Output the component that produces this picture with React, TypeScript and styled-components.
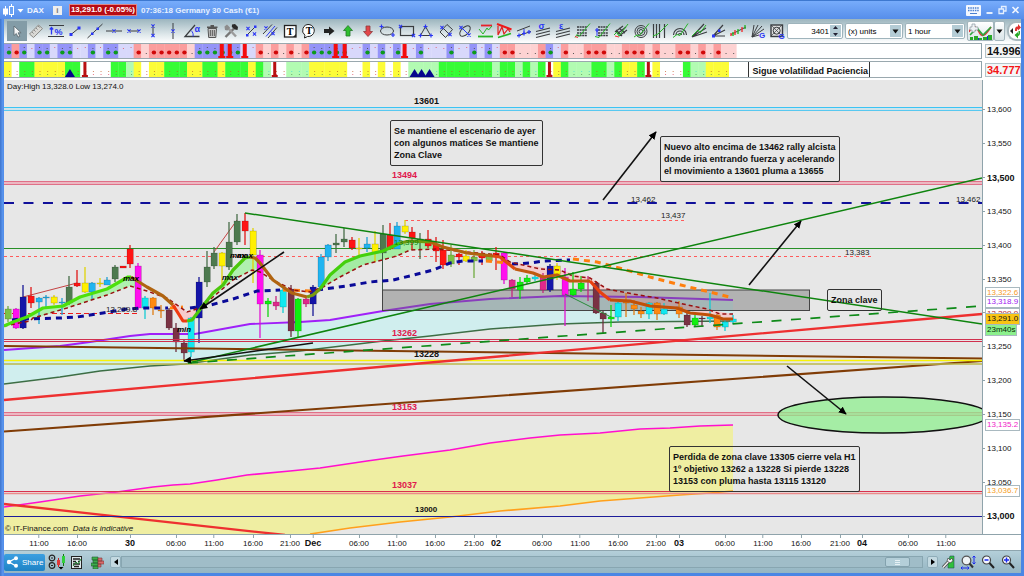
import React from "react";
import styled, { createGlobalStyle, css } from "styled-components";

const GlobalStyle = createGlobalStyle`
  * { box-sizing: border-box; }
  body { margin: 0; background: #4a86e4; font-family: "Liberation Sans", Arial, sans-serif; color: #111; }
  button, input, select { font-family: inherit; }
`;

/* ---------- shell ---------- */

const Shell = styled.div`
  display: flex;
  flex-direction: column;
  min-height: 100vh;
  padding: 0 3px 3px 4px;
  background: linear-gradient(90deg, #3f74cc 0, #5b98f2 3px, #4a86e4 4px);
`;

const TitleBar = styled.header`
  display: flex;
  align-items: center;
  height: 19px;
  margin: 0 -3px 0 -4px;
  padding: 0 4px 0 3px;
  border-top: 1px solid #3d78d0;
  background: linear-gradient(#77acfb, #568eea);
  color: #fff;
  font-size: 8px;
  font-weight: bold;
`;

const Instrument = styled.button`
  display: flex;
  align-items: center;
  gap: 3px;
  padding: 0;
  border: 0;
  background: none;
  color: #f0f6ff;
  font-size: 8px;
  font-weight: bold;
`;

const InfoButton = styled.button`
  width: 9px;
  height: 9px;
  margin: 0 7px 0 9px;
  padding: 0;
  border: 0;
  background: #eee;
  color: #777;
  font-size: 8px;
  line-height: 9px;
  font-weight: bold;
`;

const Quote = styled.span`
  padding: 0 1px;
  border: 1px solid #d88;
  background: #b80c14;
  line-height: 10px;
  white-space: nowrap;
`;

const Clock = styled.span`
  margin-left: 4px;
  color: #e6f0ff;
  white-space: nowrap;
`;

const WindowButtons = styled.div`
  display: flex;
  align-items: center;
  gap: 4px;
  margin-left: auto;
`;

const PlainButton = styled.button`
  display: flex;
  padding: 0;
  border: 0;
  background: none;
`;

/* ---------- toolbar ---------- */

const Toolbar = styled.div`
  display: flex;
  align-items: center;
  height: 24px;
  background: linear-gradient(#9cb5be, #dfe8eb 65%, #fff);
`;

const ToolGroup = styled.div`
  display: grid;
  grid-auto-flow: column;
  grid-auto-columns: 1fr;
  flex: 1;
  max-width: 780px;
  margin-left: 3px;
`;

const Tool = styled.button<{ $active?: boolean }>`
  display: flex;
  align-items: center;
  justify-content: center;
  height: 20px;
  padding: 0;
  border: 0;
  background: ${(p) => (p.$active ? "#839ca7" : "none")};
`;

const field = css`
  height: 16px;
  border: 1px solid #9fb4bc;
  border-radius: 2px;
  background: #fff;
  color: #222;
  font-size: 8px;
`;

const NumberBox = styled.label`
  ${field}
  display: flex;
  width: 56px;
  margin-right: 2px;
  padding: 1px;
`;

const NumberInput = styled.input`
  flex: 1;
  min-width: 0;
  padding: 0 1px;
  border: 0;
  outline: 0;
  background: none;
  font-size: 8px;
  text-align: right;
`;

const Spinner = styled.span`
  display: flex;
  width: 11px;
  align-items: center;
  justify-content: center;
  background: #b4ccd5;
`;

const SelectWrap = styled.span<{ $w: number }>`
  ${field}
  display: flex;
  width: ${(p) => p.$w}px;
  margin-right: 2px;
  padding: 1px;
`;

const Select = styled.select`
  appearance: none;
  flex: 1;
  min-width: 0;
  padding: 0 0 0 1px;
  border: 0;
  background: none;
  font-size: 8px;
`;

const IndicatorButton = styled.button<{ $w: number }>`
  display: flex;
  align-items: center;
  justify-content: center;
  width: ${(p) => p.$w}px;
  height: 20px;
  padding: 0;
  border: 1px solid #a4b6bd;
  border-radius: 2px;
  background: linear-gradient(#fff, #d9e4e8);
`;

const FlipButton = styled.button`
  display: flex;
  align-items: center;
  flex: none;
  width: 14px;
  height: 20px;
  margin-left: auto;
  padding: 0 0 0 1px;
  border: 2px solid #a9b9bf;
  border-right: 0;
  border-radius: 9px 0 0 9px;
  background: #fff;
`;

/* ---------- panels ---------- */

const Panels = styled.main`
  display: grid;
  grid-template-columns: 1fr 39px;
  background: #fff;
`;

const StripPlot = styled.div<{ $h: number }>`
  position: relative;
  height: ${(p) => p.$h}px;
  border-top: 1px solid #9aa8ae;
  border-right: 1px solid #8fa3ab;
  border-bottom: 1px solid #9aa8ae;
  margin-bottom: 2px;
  overflow: hidden;
`;

const StripSvg = styled.svg`
  display: block;
  width: 100%;
  height: 100%;
`;

const StripValue = styled.div<{ $color: string }>`
  align-self: center;
  margin: 0 0 2px 3px;
  padding-left: 1px;
  border: 1px solid #b4c3c9;
  background: #f4f6f7;
  color: ${(p) => p.$color};
  font-size: 11px;
  line-height: 12px;
  font-weight: bold;
  overflow: hidden;
`;

const StripNote = styled.div`
  position: absolute;
  top: 0;
  left: 76.2%;
  padding: 0 1px 0 3px;
  border: 1px solid #333;
  border-width: 0 1px;
  font-size: 9px;
  line-height: 19px;
  font-weight: bold;
  white-space: nowrap;
`;

const Plot = styled.div`
  position: relative;
  background: #e7e7e7;
  overflow: hidden;
`;

const PlotSvg = styled.svg`
  display: block;
  width: 100%;
  height: auto;
`;

const Overlay = styled.div`
  position: absolute;
  white-space: nowrap;
`;

const Note = styled(Overlay)`
  padding: 4px 3px;
  border: 1px solid #333;
  border-radius: 2px;
  font-size: 9px;
  line-height: 12px;
  font-weight: bold;
`;

const Caption = styled(Overlay)`
  font-size: 8px;
  line-height: 10px;
`;

const PriceAxis = styled.div`
  position: relative;
  display: flex;
  flex-direction: column;
  padding: 13px 0 1px;
  border-left: 1px solid #8fa3ab;
`;

const PriceTick = styled.div<{ $major: boolean }>`
  display: flex;
  align-items: center;
  flex: 1;
  gap: 2px;
  font-size: ${(p) => (p.$major ? 9 : 8)}px;
  font-weight: ${(p) => (p.$major ? "bold" : "normal")};
  &::before {
    content: "";
    width: 2px;
    height: 1px;
    background: #8fa3ab;
  }
`;

const PriceTag = styled.div<{ $color: string; $bg?: string }>`
  position: absolute;
  left: 2px;
  height: 12px;
  margin-top: -6px;
  padding: 0 1px;
  border: 1px solid #a9b9c0;
  background: ${(p) => p.$bg || "#fff"};
  color: ${(p) => p.$color};
  font-size: 8px;
  line-height: 10px;
`;

const TimeAxis = styled.div`
  position: relative;
  height: 16px;
  border-top: 1px solid #8fa3ab;
  grid-column: 1 / -1;
`;

const TimeScale = styled.div`
  position: relative;
  margin-right: 39px;
`;

const TimeTick = styled(Overlay)<{ $major: boolean }>`
  top: 0;
  transform: translateX(-50%);
  font-size: ${(p) => (p.$major ? 9 : 8)}px;
  font-weight: ${(p) => (p.$major ? "bold" : "normal")};
  line-height: 11px;
  text-align: center;
  &::before {
    content: "";
    display: block;
    width: 1px;
    height: 3px;
    margin: 0 auto;
    background: #8fa3ab;
  }
`;

/* ---------- footer ---------- */

const Footer = styled.footer`
  display: flex;
  align-items: center;
  height: 23px;
  padding-right: 3px;
  border-top: 1px solid #8ea5ae;
  background: linear-gradient(#b4cfd9, #94b5c2);
`;

const ShareButton = styled.button`
  display: flex;
  align-items: center;
  gap: 3px;
  width: 41px;
  height: 17px;
  padding: 0 0 0 2px;
  border: 0;
  border-radius: 2px;
  background: linear-gradient(#3b9fe0, #1e83c6);
  color: #fff;
  font-size: 8px;
`;

const FooterGroup = styled.div`
  display: flex;
  align-items: center;
  margin: 0 3px 0 2px;
`;

const FooterButton = styled(PlainButton)`
  width: 20px;
  justify-content: center;
`;

const ArrowButton = styled.button`
  display: flex;
  align-items: center;
  justify-content: center;
  width: 11px;
  height: 12px;
  padding: 0;
  border: 1px solid #8fadb9;
  border-radius: 2px;
  background: #c3d9e1;
`;

const Track = styled.div`
  flex: 1;
  display: flex;
  justify-content: flex-end;
  height: 12px;
  margin: 0 4px 0 0;
  padding-right: 12px;
  border: 1px solid #88a6b1;
  background: #a0bdc8;
`;

const Thumb = styled.div`
  display: flex;
  align-items: center;
  justify-content: center;
  width: 25px;
  border: 1px solid #83a2ae;
  border-radius: 2px;
  background: #b4cfd9;
  color: #fff;
`;

/* ---------- icons ---------- */

const K = "#3a3d40";
const B = "#2a36f5";
const G = "#28b428";

const X = ({ x, y, c = B }: { x: number; y: number; c?: string }) => (
  <path d={`M${x - 1.6} ${y - 1.6}l3.2 3.2M${x + 1.6} ${y - 1.6}l-3.2 3.2`} stroke={c} strokeWidth="1.1" fill="none" />
);

const Cross = ({ x, y }: { x: number; y: number }) => (
  <path d={`M${x - 2} ${y}h4M${x} ${y - 2}v4`} stroke={B} strokeWidth="1.2" fill="none" />
);

const Ln = ({ d, c = K, w = 1, dash }: { d: string; c?: string; w?: number; dash?: string }) => (
  <path d={d} stroke={c} strokeWidth={w} strokeDasharray={dash} fill="none" />
);

const tools: [string, React.ReactNode][] = [
  ["Select", <path d="M6 4v9.5l2.3-2 1.7 3.6 1.8-.8-1.7-3.5h3z" fill="#f4f6f7" stroke="#59666c" strokeWidth=".8" />],
  ["Ruler", <g><path d="M2.5 12L11.5 3l4 3.6L6.5 15.5z" fill="#d8d8d4" stroke="#8a8a86" /><Ln d="M5 10l1.6 1.6M7 8l1.6 1.6M9 6l1.6 1.6M11 4l1.6 1.6" c="#777" w={0.8} /></g>],
  ["Measure", <g><Ln d="M2 3.5h15M1 14.5h16" /><Ln d="M4.500 12.500V6M2.800 7.500L4.500 5.500 6.200 7.500" c={B} w={1.3} /><text x="7.500" y="12.500" fontSize="9" fontWeight="bold" fill={B} fontFamily="Liberation Sans">%</text></g>],
  ["Segment", <g><Ln d="M5 12.5L13 6" /><path d="M3.5 11h3v3h-3zM11.5 4.5h3v3h-3z" fill={B} /></g>],
  ["Line", <g><Ln d="M1.5 16L16.5 2" /><path d="M5 10.5h2.5V13H5zM10.5 5.5H13V8h-2.5z" fill={B} /></g>],
  ["Horizontal line", <g><Ln d="M1 9h16" /><X x={9} y={9} /></g>],
  ["Horizontal segment", <g><Ln d="M4 9h10" /><X x={4} y={9} /><X x={14} y={9} /></g>],
  ["Vertical segment", <g><Ln d="M9 4v10" /><X x={9} y={4} /><X x={9} y={13.5} /></g>],
  ["Vertical line", <g><Ln d="M9 1v16" /><X x={9} y={9} /></g>],
  ["Angle", <g><Ln d="M16.5 14.5H2L12 3" w={1.3} /><Ln d="M8 8.5c2 1.5 2.5 4 2 6" c={B} /><text x="11.500" y="10" fontSize="9" fontWeight="bold" fill={B} fontFamily="Liberation Sans">α</text></g>],
  ["Delete", <g><path d="M5 6.5h8.5l-.7 9H5.7z" fill="#c9c9c9" stroke="#555" /><path d="M4 4.5h10.5v1.500H4zM7.5 3h3.5v1.500H7.5z" fill="#555" /><Ln d="M7.3 8v6M9.3 8v6M11.3 8v6" c="#555" /></g>],
  ["Settings", <g><Ln d="M3.5 15L13 5.5" c="#777" w={2.4} /><path d="M10 2.5l3-.5 3 3-.5 3-2.5-.5L9.8 5z" fill="#2b2b2b" /><Ln d="M5.5 5.5L14 14.5" c="#9b9b9b" w={2.4} /><path d="M2.5 4.5L5 2.5l3 3-2.5 3L3 8z" fill="#8c8c8c" /></g>],
  ["Short line", <g><Ln d="M4.5 13.5L14 4" /><X x={6} y={6.5} /><X x={12.5} y={12} /><path d="M4 12h2.5v2.5H4zM12 3.500h2.5V6H12z" fill={B} /></g>],
  ["Parallel", <g><Ln d="M2 12L11 2.500M7 16L16 5.500" /><Ln d="M5 14.500L14 4" c={B} /><X x={5} y={6} /><X x={12} y={11.5} /></g>],
  ["Text", <g><rect x="3.5" y="3.5" width="11.5" height="11.5" fill="#fff" stroke="#222" strokeWidth="1.3" /><text x="9" y="13" fontSize="10" fontWeight="bold" textAnchor="middle" fontFamily="Liberation Serif">T</text><path d="M12 15h3v-3z" fill="#222" /></g>],
  ["Callout", <g><path d="M9 2.5a6 6 0 1 1-1.5 12L4.5 16l.4-2.8A6 6 0 0 1 9 2.5z" fill="#fff" stroke="#222" /><text x="9" y="12" fontSize="10" fontWeight="bold" textAnchor="middle" fontFamily="Liberation Serif">T</text></g>],
  ["Arrow right", <path d="M4 7h5V4.5l5.5 4.5L9 13.5V11H4z" fill="#222" />],
  ["Arrow up", <path d="M9 3.5l4.5 5H11V14H7V8.5H4.5z" fill="#2fbf2f" stroke="#24772b" strokeWidth=".8" />],
  ["Arrow down", <path d="M9 14.5L13.5 9.5H11V4H7v5.5H4.5z" fill="#e2464a" stroke="#8d3a3d" strokeWidth=".8" />],
  ["Ellipse", <g><ellipse cx="9" cy="9" rx="6.5" ry="4" fill="none" stroke={K} /><Cross x={3.5} y={4.5} /><Cross x={15} y={13} /></g>],
  ["Rectangle", <g><rect x="2.5" y="4.5" width="13" height="9" fill="none" stroke={K} strokeWidth="1.2" /><X x={2.5} y={4.5} /><X x={15.5} y={13.5} /></g>],
  ["Triangle", <g><path d="M8.5 4.5L13.5 13.5H3.5z" fill="none" stroke={K} /><Cross x={8.5} y={4.5} /><Cross x={3.5} y={13.5} /><Cross x={14} y={13.5} /></g>],
  ["Rotated rectangle", <g><path d="M10 2.5l5.5 5L8.5 15.5 3 10z" fill="none" stroke={K} /><Ln d="M5 5l8 8" /><X x={5} y={5.5} /><X x={13} y={12.5} /></g>],
  ["Rotated ellipse", <g><ellipse cx="9" cy="9" rx="6.5" ry="3.6" transform="rotate(-45 9 9)" fill="none" stroke={K} /><Ln d="M6 6l6.5 6.5" c={B} /><X x={5} y={5.5} /><X x={13} y={13} /></g>],
  ["Range", <g><Ln d="M5 3.5h11" c="#e8202a" w={1.8} /><Ln d="M2 14.5h15" c={G} w={1.8} /><Ln d="M3 7l4 5 4-6 1.5 2L16 4" c={G} /></g>],
  ["Wedge", <g><Ln d="M2 2l14.5 5.5" c="#f01818" w={2} /><Ln d="M3 4v9l4-8 2 7 4-5 2 3" c="#e02020" w={1.2} /><Ln d="M3 15.5l13-4" c={G} w={1.6} /></g>],
  ["Channel", <g><Ln d="M2 9l13-5M2 14l14-4.5" /><Ln d="M9 7v5" c={B} /><Cross x={4} y={13.5} /><Cross x={9} y={11.5} /><Cross x={14} y={10} /></g>],
  ["Deviation", <g><Ln d="M2 9.5l14-3.5M2 12.5l14-3.5M2 15.5l14-3.5" w={1.2} /><text x="4.5" y="7" fontSize="9" fontWeight="bold" fill={B} fontFamily="Liberation Sans">σ</text></g>],
  ["Error channel", <g><Ln d="M2 9.5l14-3.5M2 12.5l14-3.5M2 15.5l14-3.5" w={1.2} /><text x="5" y="7" fontSize="9" fontWeight="bold" fill={B} fontFamily="Liberation Sans">ε</text></g>],
  ["Retracement", <g><Ln d="M4 5h10M4 8h10M4 11h10M4 13.5h10" w={1.4} dash="2 .6" /><Ln d="M2 15.5l2-3 2 2L17 1.5" c={G} /><Ln d="M2 14.500l3 1" c="#e33" /></g>],
  ["Extension", <g><Ln d="M5 5h10M5 8h10M5 11h10M5 13.5h10" w={1.4} dash="2 .6" /><Ln d="M4 8v6" c={B} /><Cross x={4} y={8} /><Ln d="M2 14.5l4 1L17 1.5" c={G} /></g>],
  ["Fib channel", <g><Ln d="M3 10l8-6M5 12l9-7M7 14l8-6M4 8l6 6M7 6l6 5" w={1.2} /><Ln d="M2 13l3-3 2 4L16 2" c={G} /><Ln d="M3 14l4 1" c="#e33" /></g>],
  ["Fib circles", <g><circle cx="9" cy="9.5" r="2" fill="none" stroke={K} /><circle cx="9" cy="9.5" r="4" fill="none" stroke={K} /><circle cx="9" cy="9.5" r="6" fill="none" stroke={K} /><Ln d="M2 15l3-2 2 1L17 1.5" c={G} /></g>],
  ["Time zones", <g><Ln d="M2.5 2v14M5.5 2v14M8.5 2v14M13.5 2v14" w={1.2} /><Ln d="M2 14l5-2 4-4 6-6" c={G} /></g>],
  ["Fib arcs", <g><Ln d="M2.5 13a6.5 6.5 0 0 1 13 0M5 13a4 4 0 0 1 8 0M7.5 13a1.5 1.5 0 0 1 3 0" w={1.2} /><Ln d="M2 15.5l4-3 3 1L17 1.5" c={G} /></g>],
  ["Fan", <g><Ln d="M2 15L14 2M2 15l14-9M2 15l15-5" w={1.2} /><Ln d="M2 14l6-6 2 3 6-8" c={G} /></g>],
  ["Speed lines", <g><Ln d="M3 14L13 3M3 14l12-6M3 14h12" w={1.2} /><path d="M2 12.5h3v3H2zM8 7.5h2.5V10H8z" fill={B} /></g>],
  ["Pitchfork", <g><Ln d="M2 12.5L17 5" /><Ln d="M2 11v3M6 8v5M13 5v5" c="#e33" w={1.4} /><Ln d="M4 14v-4M9 7v5M16 3v4" c={G} w={1.4} /></g>],
  ["Gann fan", <g><Ln d="M3 15L5 3M3 15L9 3M3 15l10-11M3 15l12-8M3 15l7-2" /><text x="10" y="16" fontSize="8" fontWeight="bold" fill={B} fontFamily="Liberation Sans">G</text></g>],
  ["Gann square", <g><rect x="3" y="3" width="11.5" height="11.5" fill="#ddd" stroke={K} strokeWidth="1.4" /><circle cx="8.7" cy="8.7" r="3.5" fill="none" stroke={K} /><Ln d="M3 3l11 11M14 3L3 14" w={0.7} /><text x="10.5" y="17" fontSize="8" fontWeight="bold" fill={B} fontFamily="Liberation Sans">G</text></g>],
];

const Caret = () => (
  <svg width="7" height="5" viewBox="0 0 7 5"><path d="M.5 .5h6L3.5 4.5z" fill="#111" /></svg>
);

/* ---------- data ---------- */

const trendRuns =
  "B1 R1 B1 b1 B2 b1 B2 b2 B1 b1 B2 b2 R1 r1 R5 r1 B6 b2 R1 r1 R1 r1 R1 r1 R1 B5 b2 B1 b1 B1 b1 B1 b2 B1 b3 B1 b2 B1 b1 B1 b1 R2 r3 R1 B1 b1 R1 r2 R3 r2 R3 r1 R1 r2 R2 r1 R1 r1 R1 r2";
const volRuns =
  "Y1 W1 G2 Y4 G2 W4 G2 g1 Y1 W1 Y2 G3 Y2 G2 Y1 G3 Y1 G1 g1 W2 g3 Y5 W2 Y1 W1 Y1 W1 Y1 W1 g4 G7 g1 G2 g1 G1 g1 G1 W1 Y1 G1 g3 G2 g1 G1 Y2 G1 W1 Y1 W3 G1 g2 Y3";

const expand = (runs: string) => runs.split(" ").flatMap((r) => Array(Number(r.slice(1))).fill(r[0]) as string[]);

const trendFill: Record<string, string> = { B: "#9494f8", b: "#d8d8fb", R: "#fb9d9d", r: "#fdd2d2" };
const volFill: Record<string, string> = { Y: "#fcfc38", G: "#36fc36", g: "#b2fbb2", W: "#fff" };
const STEP = 7.636;

type Candle = [number, number, number, number, number, string];
const palette: Record<string, string> = {
  g: "#7cc244", m: "#ff10ee", n: "#1414a8", r: "#ff1414", b: "#20b4f0", y: "#fff000", d: "#4d7a4f",
  c: "#12e8f0", o: "#ff8a10", w: "#7a3244", l: "#10f010", p: "#e0288c",
};
/* x, high, low, body top, body bottom, colour key */
const candles: Candle[] = [
  [8, 306, 322, 309, 319, "g"], [16, 308, 329, 309, 328, "m"], [23, 285, 329, 297, 328, "n"],
  [31, 287, 308, 296, 303, "r"], [39, 297, 324, 298, 302, "b"], [46, 295, 307, 297, 298, "b"],
  [54, 295, 305, 297, 303, "y"], [62, 298, 315, 302, 303, "b"], [69, 276, 305, 287, 303, "d"],
  [77, 270, 287, 283, 286, "r"], [85, 267, 293, 283, 292, "y"], [92, 282, 299, 283, 292, "b"],
  [100, 278, 287, 283, 284, "y"], [107, 277, 285, 280, 285, "b"], [115, 265, 282, 267, 279, "d"],
  [123, 266, 268, 266, 268, "r"], [130, 245, 268, 249, 264, "r"], [138, 263, 310, 266, 308, "m"],
  [145, 296, 319, 298, 308, "c"], [153, 297, 315, 298, 308, "o"], [161, 305, 318, 310, 311, "o"],
  [169, 308, 330, 310, 328, "w"], [176, 323, 352, 328, 342, "w"], [184, 340, 360, 343, 353, "w"],
  [191, 317, 357, 318, 352, "c"], [199, 277, 343, 282, 318, "n"], [207, 251, 287, 267, 282, "d"],
  [214, 247, 269, 253, 266, "d"], [222, 252, 287, 253, 266, "y"], [229, 222, 270, 242, 267, "d"],
  [237, 214, 245, 221, 242, "d"], [245, 213, 245, 221, 231, "r"], [253, 228, 283, 231, 255, "y"],
  [260, 250, 338, 255, 304, "m"], [268, 298, 317, 301, 304, "l"], [276, 296, 310, 302, 306, "p"],
  [283, 285, 313, 290, 307, "c"], [291, 285, 337, 289, 331, "w"], [298, 298, 337, 299, 331, "l"],
  [306, 297, 307, 299, 304, "p"], [313, 285, 316, 287, 304, "n"], [321, 254, 290, 257, 287, "b"],
  [328, 244, 261, 245, 257, "b"], [336, 234, 253, 243, 245, "d"], [344, 228, 247, 239, 242, "d"],
  [352, 237, 250, 240, 248, "r"], [359, 238, 256, 248, 249, "y"], [367, 237, 252, 244, 248, "b"],
  [375, 231, 262, 244, 253, "y"], [383, 225, 253, 234, 253, "d"], [390, 223, 250, 235, 249, "r"],
  [397, 222, 249, 226, 249, "b"], [405, 220, 234, 226, 232, "y"], [412, 227, 250, 232, 238, "r"],
  [420, 233, 259, 239, 242, "d"], [428, 230, 248, 239, 246, "r"], [436, 237, 262, 244, 251, "r"],
  [443, 240, 269, 250, 265, "r"], [451, 245, 267, 255, 264, "g"], [459, 253, 265, 254, 257, "r"],
  [466, 250, 262, 256, 261, "y"], [474, 250, 278, 257, 261, "g"], [482, 251, 265, 255, 258, "r"],
  [489, 253, 262, 256, 261, "g"], [496, 247, 270, 253, 257, "r"], [504, 252, 284, 253, 280, "m"],
  [512, 279, 297, 280, 289, "p"], [520, 277, 299, 282, 290, "l"], [527, 275, 284, 278, 282, "l"],
  [535, 275, 281, 277, 279, "c"], [543, 273, 293, 277, 290, "p"], [550, 264, 292, 266, 290, "n"],
  [557, 263, 280, 266, 274, "y"], [565, 268, 326, 277, 295, "m"], [573, 272, 296, 289, 295, "l"],
  [581, 276, 292, 283, 289, "l"], [588, 276, 301, 281, 282, "p"], [596, 281, 314, 283, 313, "w"],
  [603, 311, 334, 313, 319, "w"], [611, 305, 327, 317, 319, "l"], [618, 302, 321, 303, 317, "c"],
  [626, 293, 317, 302, 303, "o"], [634, 300, 315, 305, 309, "o"], [641, 307, 318, 311, 314, "o"],
  [649, 302, 319, 303, 314, "c"], [657, 302, 320, 303, 314, "o"], [664, 303, 315, 309, 314, "c"],
  [679, 301, 318, 307, 314, "o"], [687, 313, 327, 315, 325, "w"], [695, 315, 327, 318, 325, "l"],
  [702, 316, 327, 318, 319, "w"], [710, 293, 323, 317, 319, "c"], [717, 314, 330, 315, 327, "o"],
  [725, 320, 331, 322, 327, "c"], [733, 315, 324, 319, 322, "c"],
];

const average: [string, string][] = [
  ["#4ce00c", "4,326 13,322 27,317 43,308 63,306 80,297 107,289 128,277 131,277"],
  ["#b06410", "131,277 147,287 163,296 173,305"],
  ["#f03a10", "173,305 183,321 187,321"],
  ["#4cc80c", "187,321 192,320 202,307 213,293 223,285 233,270 245,258 250,257"],
  ["#b06410", "250,257 255,258 260,263 273,280 283,287 292,293 307,297"],
  ["#7a9a10", "307,297 313,295 320,289"],
  ["#44d00c", "320,289 330,275 345,262 360,256 383,251 400,243"],
  ["#6f9a10", "400,243 410,241 430,242"],
  ["#b06410", "430,242 443,247 467,253 493,256"],
  ["#e04a10", "493,256 500,257 510,265 515,269"],
  ["#c05a10", "515,269 533,273 543,277 557,275 570,281 590,281"],
  ["#e84010", "590,281 600,292 610,300"],
  ["#c05008", "610,300 630,301 650,306 677,308 690,313 710,315 723,319 733,319"],
];

const signal =
  "4,326 30,321 33,318 67,308 107,295 130,286 147,291 167,298 187,312 200,308 213,297 233,280 252,270 260,272 273,280 293,290 310,292 323,287 340,277 363,265 397,256 410,250 437,249 467,252 500,255 510,262 540,269 560,270 573,276 590,278 607,289 633,294 657,298 683,304 707,309 720,314 733,314";

const thick: [string, string][] = [
  ["#0a0a98", "12,320 20,319 60,318 77,317 103,313 127,309 143,308 168,308"],
  ["#ff7f0e", "170,308 183,307"],
  ["#0a0a98", "190,308 207,306 233,299 257,291 280,290"],
  ["#ff7f0e", "283,290 313,291"],
  ["#0a0a98", "317,290 347,286 370,282 393,280 410,276 433,270 450,263 463,261 483,261"],
  ["#ff7f0e", "486,261 497,262 507,263"],
  ["#0a0a98", "512,264 530,263 543,261 570,260"],
  ["#ff7f0e", "573,259 597,262 623,269 650,277 677,284 697,289 710,292 733,298"],
];

const purple = "4,350 60,346 90,342 130,336 150,334 195,334 250,324 300,322 330,320 383,311 430,304 490,299 560,296 640,297 733,300";
const lowerGreen = "4,384 60,377 100,371 150,366 185,364 250,355 300,351 383,341 430,336 490,329 560,324 620,322 733,321";
const magenta = "4,507 40,502 80,496 117,492 153,487 173,485 190,484 217,480 247,475 290,471 320,468 367,461 403,456 450,450 490,443 530,438 560,435 600,433 640,429 670,428 700,426 733,425";
const orange = "310,534 350,528 400,522 450,517 500,511 560,506 600,501 640,498 680,495 710,493 733,491";
const flip = (pts: string) => pts.split(" ").reverse().join(" ");

const arrows = [
  [284, 252, 200, 309], [313, 343, 184, 361], [603, 200, 656, 132], [749, 285, 801, 221], [787, 366, 846, 414],
];

const levels: [string, number, number, string, number][] = [
  ["13601", 414, 104, "#111", 9], ["13494", 392, 178, "#e0184c", 9], ["13262", 392, 336, "#e0184c", 9],
  ["13228", 414, 357, "#111", 9], ["13153", 392, 410, "#e0184c", 9], ["13037", 392, 488, "#e0184c", 9],
  ["13000", 415, 512, "#111", 8],
];

const marks: [string, number, number][] = [
  ["max", 123, 281], ["max", 222, 280], ["max", 230, 258], ["max", 237, 258], ["min", 177, 332],
];

const prices = [13600, 13550, 13500, 13450, 13400, 13350, 13300, 13250, 13200, 13150, 13100, 13050, 13000];

const times: [string, number][] = [
  ["11:00", 39], ["16:00", 77], ["30", 130], ["06:00", 176], ["11:00", 214], ["16:00", 253], ["21:00", 290],
  ["Dec", 313], ["06:00", 359], ["11:00", 397], ["16:00", 435], ["21:00", 474], ["02", 496], ["06:00", 542],
  ["11:00", 580], ["16:00", 618], ["21:00", 656], ["03", 679], ["06:00", 725], ["11:00", 763], ["16:00", 801],
  ["21:00", 840], ["04", 862], ["06:00", 908], ["11:00", 946],
];

const notes: { x: number; y: number; lines: string[] }[] = [
  { x: 390, y: 120, lines: ["Se mantiene el escenario de ayer", "con algunos matices Se mantiene", "Zona Clave"] },
  { x: 660, y: 136, lines: ["Nuevo alto encima de 13462 rally alcista", "donde iria entrando fuerza y acelerando", "el movimiento a 13601 pluma a 13655"] },
  { x: 827, y: 289, lines: ["Zona clave"] },
  { x: 669, y: 446, lines: ["Perdida de zona clave 13305 cierre vela H1", "1º objetivo 13262 a 13228 Si pierde 13228", "13153 con pluma hasta 13115 13120"] },
];

const place = (x: number, y: number) => ({ left: `${((x - 4) / 978) * 100}%`, top: `${((y - 80) / 454) * 100}%` });
const priceTop = (y: number) => ({ top: `${((y - 80) / 454) * 100}%` });

/* ---------- charts ---------- */

const Stem = ({ x, h, color }: { x: number; h: number; color: string }) => (
  <path d={`M${x - 2} 0h4v${h - 2}h1.5v2h-7v-2h1.5z`} fill={color} />
);

const TrendStrip = () => (
  <StripSvg viewBox="0 0 978 14" preserveAspectRatio="none">
    {expand(trendRuns).map((c, i) => {
      const x = i * STEP;
      const strong = c === "B" || c === "R";
      return (
        <g key={i}>
          <rect x={x} y="0" width={STEP + 0.3} height="14" fill={trendFill[c]} />
          {strong && <ellipse cx={x + 5} cy="8.5" rx="2.2" ry="1.9" fill={c === "B" ? "#0c9a1c" : "#d00808"} />}
          {c !== "R" && <rect x={x + 4.5} y={c === "r" ? 9 : 3 + (i % 2)} width="1" height="1" fill={c === "b" ? "#e06a7a" : "#555"} />}
        </g>
      );
    })}
    {[218, 226, 241, 332, 341, 401].map((x) => <Stem key={x} x={x} h={14} color="#f40c0c" />)}
  </StripSvg>
);

const VolatilityStrip = () => (
  <StripSvg viewBox="0 0 978 15" preserveAspectRatio="none">
    {expand(volRuns).map((c, i) => (
      <g key={i}>
        <rect x={i * STEP} y="0" width={STEP + 0.3} height="15" fill={volFill[c]} />
        <rect x={i * STEP + 5} y="9" width="1" height="1" fill={c === "g" ? "#3adada" : "#c05a20"} fillOpacity=".7" />
        <rect x={i * STEP + 5} y="12" width="1" height="1" fill={c === "W" ? "#e03a5a" : "#4a8a4a"} fillOpacity=".7" />
      </g>
    ))}
    {[66, 411, 418, 426].map((x) => <path key={x} d={`M${x - 5} 15L${x} 7l5 8z`} fill="#06068c" />)}
    {[81, 271, 546, 645].map((x) => <path key={x} d={`M${x - 1.5} 0h3v13h1.5v2h-6v-2h1.5z`} fill="#b81010" />)}
  </StripSvg>
);

const HLine = ({ y, c, x2 = 982, x1 = 4, w = 1, dash }: { y: number; c: string; x1?: number; x2?: number; w?: number; dash?: string }) => (
  <line x1={x1} x2={x2} y1={y} y2={y} stroke={c} strokeWidth={w} strokeDasharray={dash} />
);

const fan = (top: string, bottom: string) => `${top} ${flip(bottom)}`;

const PriceChart = () => (
  <PlotSvg viewBox="4 80 978 454">
    <defs>
      <marker id="head" viewBox="0 0 10 10" refX="9" refY="5" markerWidth="8" markerHeight="8" markerUnits="userSpaceOnUse" orient="auto">
        <path d="M0 0.5L10 5L0 9.5z" />
      </marker>
    </defs>
    <polygon points={fan(purple, lowerGreen)} fill="#d0eeee" />
    <polygon points={`${magenta} ${flip(orange)} 4,534`} fill="#efeea2" />

    <HLine y={107.5} c="#3cc4f4" /><HLine y={109} c="#b4e2f2" /><HLine y={110.5} c="#58c8f0" />
    <rect x="4" y="182" width="978" height="2" fill="#ecb8c2" />
    <HLine y={181.5} c="#e07088" /><HLine y={184.5} c="#e07088" />
    <rect x="4" y="413" width="978" height="2" fill="#ecb8c2" />
    <HLine y={412.5} c="#e07088" /><HLine y={415.5} c="#e07088" />
    <HLine y={203} c="#10109a" w={2} dash="10 9.48" />
    <HLine y={248.5} c="#289028" />
    <HLine y={256.5} c="#ff5a5a" x2={871} dash="3 3" />
    <HLine y={220.5} c="#ff5a5a" x1={405} x2={684} dash="3 3" />
    <HLine y={313.5} c="#ee1c1c" x2={137} dash="5 3" />

    <ellipse cx="883" cy="415" rx="105" ry="18" fill="#8cf08c" fillOpacity=".72" stroke="#111" strokeWidth="1.5" />

    <polyline points={magenta} fill="none" stroke="#ff10d0" strokeWidth="1.7" />
    <polyline points={orange} fill="none" stroke="#ffa01c" strokeWidth="1.7" />

    <polygon points="30,317 43,308 63,306 80,297 107,289 128,277 140,284 140,289 130,286 107,295 67,308 33,319" fill="#b0f0b0" />
    <polygon points="202,307 213,293 223,285 233,270 245,258 254,257 262,268 252,270 233,280 213,297" fill="#b0f0b0" />
    <polygon points="320,289 330,275 345,262 360,256 383,251 410,241 437,245 437,249 410,250 397,256 363,265 340,277" fill="#a4eca4" />
    <polygon points="145,287 163,296 173,305 183,321 192,320 200,308 187,312 167,298" fill="#f6cccc" />
    <polygon points="500,256 515,269 543,277 557,275 570,281 590,281 610,300 650,306 677,308 710,315 733,319 733,314 707,309 657,298 607,289 590,278 560,270 510,262" fill="#f4cccc" />

    <polyline points={purple} fill="none" stroke="#a020f8" strokeWidth="1.8" />
    <polyline points={lowerGreen} fill="none" stroke="#3d6e45" strokeWidth="1.5" />

    <rect x="382.5" y="290" width="427" height="20.5" fill="#6a6a6a" fillOpacity=".42" stroke="#444" />
    <Ln d="M382.5 250V290" c="#3d5a45" />

    <Ln d="M23 297L77 283M214 252L237 220" c="#c03030" w={0.9} />

    {candles.map(([x, hi, lo, top, bottom, key]) => (
      <g key={x}>
        <line x1={x} x2={x} y1={hi} y2={lo} stroke={palette[key]} strokeWidth="1.2" />
        <line x1={x} x2={x} y1={hi} y2={lo} stroke="#000" strokeOpacity=".15" strokeWidth="1" />
        <rect x={x - 3} y={top} width="6.3" height={Math.max(1, bottom - top)} fill={palette[key]} stroke="#000" strokeOpacity=".25" strokeWidth=".6" />
      </g>
    ))}

    {thick.map(([c, pts], i) => <polyline key={i} points={pts} fill="none" stroke={c} strokeWidth="3" strokeDasharray="6 5" />)}
    <polyline points={signal} fill="none" stroke="#981010" strokeWidth="1.5" strokeDasharray="4 3" />
    {average.map(([c, pts], i) => <polyline key={i} points={pts} fill="none" stroke={c} strokeWidth="3.2" strokeLinejoin="round" />)}

    <HLine y={339.5} c="#d0304e" /><HLine y={341.5} c="#d0304e" />
    <Ln d="M4 346L982 358.5M4 431.5L982 361" c="#803c06" w={2.1} />
    <HLine y={360.5} c="#f8f404" w={1.3} /><HLine y={364} c="#bcb84a" w={1.3} />
    <Ln d="M4 400L982 314M4 504L285 535" c="#ee3030" w={2.3} />
    <HLine y={491.5} c="#d8304e" /><HLine y={493.5} c="#ec8a8a" w={1.4} />
    <HLine y={516.5} c="#1c1c9a" />

    <Ln d="M245 213L982 324M188 363L982 178" c="#0e840e" w={1.5} />
    <Ln d="M188 363L982 306" c="#0e8a18" w={1.7} dash="10 9.5" />
    <Ln d="M565 294L611 317" c="#2a8a3a" />

    {arrows.map(([x1, y1, x2, y2]) => (
      <line key={x1} x1={x1} y1={y1} x2={x2} y2={y2} stroke="#111" strokeWidth="1.6" markerEnd="url(#head)" />
    ))}

    <g fontFamily="Liberation Sans, Arial, sans-serif">
      {levels.map(([t, x, y, c, s]) => <text key={t} x={x} y={y} fill={c} fontSize={s} fontWeight="bold">{t}</text>)}
      {marks.map(([t, x, y], i) => <text key={i} x={x} y={y} fontSize="8" fontWeight="bold" fontStyle="italic">{t}</text>)}
      <g fontSize="8" fill="#222">
        <text x="631" y="202">13,462</text>
        <text x="956" y="202">13,462</text>
        <text x="661" y="218">13,437</text>
        <text x="845" y="255">13,383</text>
        <text x="106" y="312">13,299.8</text>
        <text x="394" y="245" fill="#0e840e">13,399</text>
      </g>
    </g>
  </PlotSvg>
);

export default function App() {
  return (
    <>
      <GlobalStyle />
      <Shell>
        <TitleBar>
          <Instrument>
            <svg width="21" height="13" viewBox="0 0 21 13">
              <path d="M2.5 2v10" stroke="#fff" /><rect x="0" y="4.5" width="5" height="6" fill="#fff" />
              <path d="M8.5 0v13" stroke="#fff" /><rect x="6.5" y="2.5" width="4" height="8" fill="#6aa2f4" stroke="#fff" />
              <path d="M14.5 5h6l-3 3.5z" fill="#fff" />
            </svg>
            DAX
          </Instrument>
          <InfoButton aria-label="Information">i</InfoButton>
          <Quote>13,291.0 (-0.05%)</Quote>
          <Clock>07:36:18 Germany 30 Cash (€1)</Clock>
          <WindowButtons>
            <PlainButton aria-label="Keyboard">
              <svg width="15" height="11" viewBox="0 0 15 11"><rect width="15" height="11" rx="1" fill="#f4f8ff" /><path d="M2 3h11M2 5.5h11" stroke="#4a7fd0" strokeWidth="1.4" strokeDasharray="1.5 .8" /><path d="M4 8.5h7" stroke="#4a7fd0" /></svg>
            </PlainButton>
            <PlainButton aria-label="Minimize">
              <svg width="9" height="10" viewBox="0 0 9 10"><path d="M1.5 8h6" stroke="#e4efff" strokeWidth="2" /></svg>
            </PlainButton>
            <PlainButton aria-label="Restore">
              <svg width="9" height="10" viewBox="0 0 9 10"><path d="M3.5 4V1.5h4.5V6H6M1 4h4.5v4.5H1z" stroke="#e4efff" strokeWidth="1.3" fill="none" /></svg>
            </PlainButton>
            <PlainButton aria-label="Close">
              <svg width="9" height="10" viewBox="0 0 9 10"><path d="M1.5 2l6 6M7.5 2l-6 6" stroke="#f0f6ff" strokeWidth="1.6" /></svg>
            </PlainButton>
          </WindowButtons>
        </TitleBar>

        <Toolbar>
          <ToolGroup>
            {tools.map(([label, art], i) => (
              <Tool key={label} aria-label={label} $active={i === 0}>
                <svg width="18" height="18" viewBox="0 0 18 18">{art}</svg>
              </Tool>
            ))}
          </ToolGroup>
          <NumberBox>
            <NumberInput aria-label="Units count" defaultValue="3401" />
            <Spinner>
              <svg width="7" height="12" viewBox="0 0 7 12"><path d="M1 4h5L3.5 1zM1 8h5l-2.5 3z" fill="#223" /></svg>
            </Spinner>
          </NumberBox>
          <SelectWrap $w={58}>
            <Select aria-label="Unit kind" defaultValue="u"><option value="u">(x) units</option></Select>
            <Spinner><Caret /></Spinner>
          </SelectWrap>
          <SelectWrap $w={60}>
            <Select aria-label="Timeframe" defaultValue="h"><option value="h">1 hour</option></Select>
            <Spinner><Caret /></Spinner>
          </SelectWrap>
          <IndicatorButton $w={27} aria-label="Add indicator">
            <svg width="24" height="17" viewBox="0 0 24 17">
              <path d="M0 9c4-8 7-6 10 0s6 4 12-5" stroke="#d83a3a" strokeWidth="1.6" fill="none" />
              <path d="M1 12L8 5l6 7 8-8" stroke="#2aa83a" strokeWidth="1.6" fill="none" />
              <path d="M1 17v-3h3v3zM5 17v-4h4v4zM10 17v-2h3v2zM14 17v-3h4v3zM19 17v-5h4v5z" fill="#28a828" />
              <path d="M9 17v-2h1v2zM18 17v-4h1v4z" fill="#1a2ad0" />
              <path d="M3 1h3v3h3v3H6v2H3V7H1V4h2z" fill="#eef2f4" stroke="#8a9aa0" strokeWidth=".7" />
            </svg>
          </IndicatorButton>
          <IndicatorButton $w={11} aria-label="Indicator menu"><Caret /></IndicatorButton>
          <FlipButton aria-label="Trade">
            <svg width="11" height="16" viewBox="0 0 11 16"><path d="M0 8l3-3v6z" fill="#222" /><path d="M5 8V6.5C5 4 6.5 3.5 8 3.5V1l3 3.5-3 3V6C7 6 7 7 7 8z" fill="#e03030" /><path d="M10 8v2c0 2-1 3-2 3v2.5L4.5 12 8 9v2c.5 0 .5-1 .5-3z" fill="#28a828" /></svg>
          </FlipButton>
        </Toolbar>

        <Panels>
          <StripPlot $h={16}><TrendStrip /></StripPlot>
          <StripValue $color="#111">14.996</StripValue>
          <StripPlot $h={17}>
            <VolatilityStrip />
            <StripNote>Sigue volatilidad Paciencia</StripNote>
          </StripPlot>
          <StripValue $color="#f41414">34.777</StripValue>

          <Plot>
            <PriceChart />
            {notes.map((n) => (
              <Note key={n.lines[0]} style={place(n.x, n.y)}>
                {n.lines.map((l) => <div key={l}>{l}</div>)}
              </Note>
            ))}
            <Caption style={place(7, 82)}>Day:High 13,328.0 Low 13,274.0</Caption>
            <Caption style={place(5, 524)}>© IT-Finance.com &nbsp;<i>Data is indicative</i></Caption>
          </Plot>
          <PriceAxis>
            {prices.map((p) => (
              <PriceTick key={p} $major={p % 500 === 0}>{p.toLocaleString("en-US")}</PriceTick>
            ))}
            <PriceTag $color="#f59a28" style={priceTop(293)}>13,322.6</PriceTag>
            <PriceTag $color="#a020f0" style={priceTop(302)}>13,318.9</PriceTag>
            <PriceTag $color="#b01818" style={priceTop(314)}>13,299.9</PriceTag>
            <PriceTag $color="#111" $bg="#f8c414" style={priceTop(319)}>13,291.0</PriceTag>
            <PriceTag $color="#062a06" $bg="#8cf08c" style={priceTop(330)}>23m40s</PriceTag>
            <PriceTag $color="#f01cc8" style={priceTop(425)}>13,135.2</PriceTag>
            <PriceTag $color="#f5a028" style={priceTop(491)}>13,036.7</PriceTag>
          </PriceAxis>

          <TimeAxis>
            <TimeScale>
              {times.map(([t, x]) => (
                <TimeTick key={x} $major={!t.includes(":")} style={{ left: `${((x - 4) / 978) * 100}%` }}>{t}</TimeTick>
              ))}
            </TimeScale>
          </TimeAxis>
        </Panels>

        <Footer>
          <ShareButton>
            <svg width="13" height="12" viewBox="0 0 13 12"><path d="M10 2L3 6l7 4" stroke="#fff" strokeWidth="1.3" fill="none" /><circle cx="10" cy="2.2" r="2" fill="#fff" /><circle cx="3" cy="6" r="2.2" fill="#fff" /><circle cx="10" cy="9.8" r="2" fill="#fff" /></svg>
            Share
          </ShareButton>
          <FooterGroup>
            <FooterButton aria-label="Chart style">
              <svg width="18" height="16" viewBox="0 0 18 16"><circle cx="4" cy="4" r="2.8" fill="none" stroke="#222" strokeWidth="1.2" /><circle cx="4" cy="11.5" r="2.8" fill="none" stroke="#222" strokeWidth="1.2" /><path d="M3 4h2M3 11.5h2" stroke="#222" /><path d="M10.5 4v9" stroke="#c22" /><rect x="9" y="6" width="3" height="5" fill="#e03a3a" /><path d="M15.5 0v12" stroke="#171" /><rect x="14" y="2" width="3" height="7" fill="#2fd03a" /><path d="M10.5 13h5L13 15.5z" /></svg>
            </FooterButton>
            <FooterButton aria-label="Data list">
              <svg width="12" height="13" viewBox="0 0 12 13"><rect x=".5" y=".5" width="10" height="12" fill="#dfe8ea" stroke="#222" /><path d="M2 3h7M2 5.5h3M7 5.5h2M2 8h7M3 10.5h5" stroke="#222" strokeWidth="1.4" /><path d="M2 10l3-4 2 2 3-5" stroke="#283" fill="none" /></svg>
            </FooterButton>
            <FooterButton aria-label="Order book">
              <svg width="13" height="13" viewBox="0 0 13 13"><path d="M1 1h6v3H1zM2 4h5v3H2zM0 7h7v3H0zM2 10h5v3H2z" fill="#3cae4a" stroke="#245a30" strokeWidth=".6" /><path d="M7 2h4v3H7zM7 5h6v3H7zM7 8h3v3H7z" fill="#d86a6a" stroke="#7a3a3a" strokeWidth=".6" /></svg>
            </FooterButton>
          </FooterGroup>
          <ArrowButton aria-label="Scroll left">
            <svg width="4" height="6" viewBox="0 0 4 6"><path d="M4 0v6L0 3z" /></svg>
          </ArrowButton>
          <Track>
            <Thumb>
              <svg width="5" height="5" viewBox="0 0 5 5"><path d="M0 .5h5M0 2.5h5M0 4.5h5" stroke="#e6f1f5" /></svg>
            </Thumb>
          </Track>
          <ArrowButton aria-label="Scroll right">
            <svg width="4" height="6" viewBox="0 0 4 6"><path d="M0 0v6L4 3z" /></svg>
          </ArrowButton>
          <FooterButton aria-label="Chart settings">
            <svg width="13" height="14" viewBox="0 0 13 14"><path d="M8 1h4v12H6V8z" fill="#2fc03a" stroke="#255" strokeWidth=".6" /><path d="M1 12.5L8 5" stroke="#444" strokeWidth="3" /><path d="M1 12.5L8 5" stroke="#eee" strokeWidth="1.6" /><path d="M6 3l2 2 2-2 1 3-3 2-3-2z" fill="#eee" stroke="#444" strokeWidth=".7" /></svg>
          </FooterButton>
          <FooterButton aria-label="Fit zoom">
            <svg width="16" height="15" viewBox="0 0 16 15"><circle cx="6.5" cy="5.5" r="4.3" fill="#eef3f5" stroke="#555" strokeWidth="1.3" /><path d="M9.5 8.5l3.5 4" stroke="#333" strokeWidth="2" /><path d="M14 1v8M12.5 2.5L14 1l1.5 1.5M12.5 7.5L14 9l1.5-1.5M1 13h8M2.5 11.5L1 13l1.5 1.5M7.5 11.5L9 13l-1.5 1.5" stroke="#1c2af0" fill="none" /></svg>
          </FooterButton>
          <FooterButton aria-label="Zoom out">
            <svg width="14" height="14" viewBox="0 0 14 14"><circle cx="5.5" cy="5" r="4" fill="#f4f7ff" stroke="#444" strokeWidth="1.2" /><path d="M8.5 8l4.5 5" stroke="#222" strokeWidth="2" /><path d="M3.5 5h4" stroke="#1c2af0" strokeWidth="1.5" /></svg>
          </FooterButton>
          <FooterButton aria-label="Zoom in">
            <svg width="14" height="14" viewBox="0 0 14 14"><circle cx="5.5" cy="5" r="4" fill="#f4f7ff" stroke="#444" strokeWidth="1.2" /><path d="M8.5 8l4.5 5" stroke="#222" strokeWidth="2" /><path d="M3 5h5M5.5 2.5v5" stroke="#1c2af0" strokeWidth="1.5" /></svg>
          </FooterButton>
        </Footer>
      </Shell>
    </>
  );
}
